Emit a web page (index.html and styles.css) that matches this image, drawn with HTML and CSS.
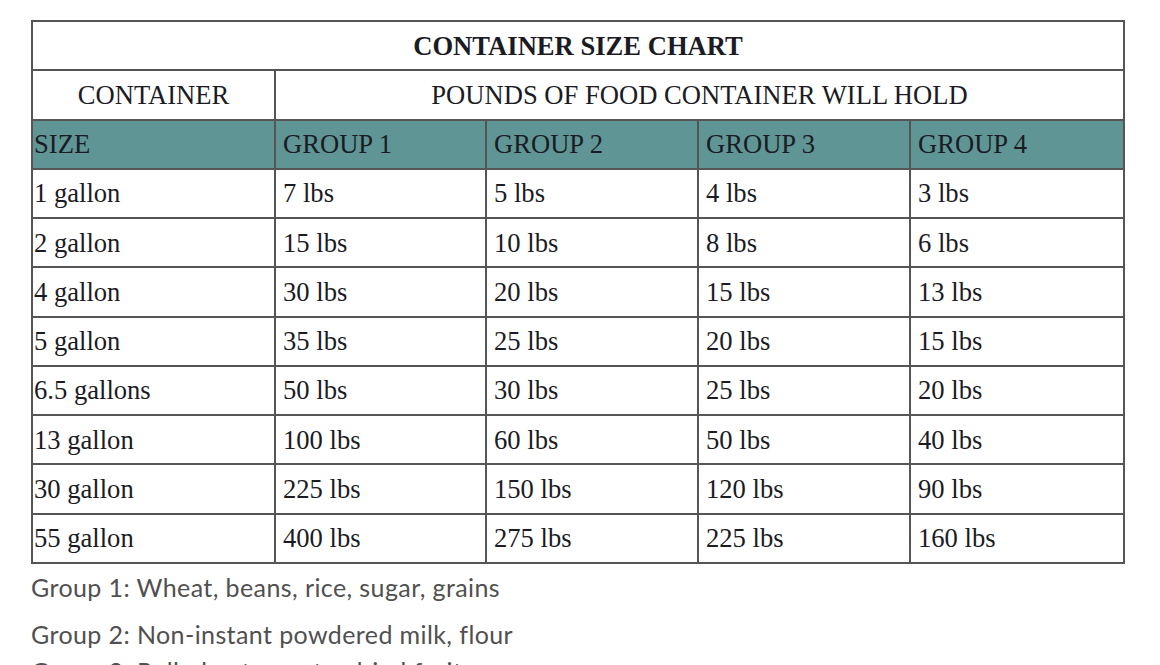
FILE: index.html
```html
<!DOCTYPE html>
<html>
<head>
<meta charset="utf-8">
<link rel="stylesheet" href="styles.css">
</head>
<body>
<div class="page">
  <table class="chart">
    <colgroup>
      <col class="c-size">
      <col class="c-g1">
      <col class="c-g2">
      <col class="c-g3">
      <col class="c-g4">
    </colgroup>
    <tr class="title-row"><th colspan="5" class="title">CONTAINER SIZE CHART</th></tr>
    <tr class="sub-row"><td class="center">CONTAINER</td><td colspan="4" class="center">POUNDS OF FOOD CONTAINER WILL HOLD</td></tr>
    <tr class="head-row"><td class="first">SIZE</td><td>GROUP 1</td><td>GROUP 2</td><td>GROUP 3</td><td>GROUP 4</td></tr>
    <tr><td class="first">1 gallon</td><td>7 lbs</td><td>5 lbs</td><td>4 lbs</td><td>3 lbs</td></tr>
    <tr><td class="first">2 gallon</td><td>15 lbs</td><td>10 lbs</td><td>8 lbs</td><td>6 lbs</td></tr>
    <tr><td class="first">4 gallon</td><td>30 lbs</td><td>20 lbs</td><td>15 lbs</td><td>13 lbs</td></tr>
    <tr><td class="first">5 gallon</td><td>35 lbs</td><td>25 lbs</td><td>20 lbs</td><td>15 lbs</td></tr>
    <tr><td class="first">6.5 gallons</td><td>50 lbs</td><td>30 lbs</td><td>25 lbs</td><td>20 lbs</td></tr>
    <tr><td class="first">13 gallon</td><td>100 lbs</td><td>60 lbs</td><td>50 lbs</td><td>40 lbs</td></tr>
    <tr><td class="first">30 gallon</td><td>225 lbs</td><td>150 lbs</td><td>120 lbs</td><td>90 lbs</td></tr>
    <tr><td class="first">55 gallon</td><td>400 lbs</td><td>275 lbs</td><td>225 lbs</td><td>160 lbs</td></tr>
  </table>
  <p class="note">Group 1: Wheat, beans, rice, sugar, grains</p>
  <p class="note">Group 2: Non-instant powdered milk, flour</p>
  <p class="note note-tail">Group 3: Rolled oats, pasta, dried fruit</p>
</div>
</body>
</html>
```
FILE: styles.css
```css
html, body {
  margin: 0;
  padding: 0;
  background: #ffffff;
}
.page {
  padding: 20px 0 0 31px;
}
.chart {
  border-collapse: collapse;
  table-layout: fixed;
  width: 1094px;
  font-family: "Liberation Serif", "Times New Roman", serif;
  font-size: 26.6px;
  color: #1b1b24;
}
.c-size { width: 243px; }
.c-g1 { width: 211px; }
.c-g2 { width: 212px; }
.c-g3 { width: 212px; }
.c-g4 { width: 214px; }
.chart td, .chart th {
  border: 2px solid #555555;
  height: 47.27px;
  padding: 0 0 0 7px;
  text-align: left;
  vertical-align: middle;
  font-weight: normal;
  white-space: nowrap;
  line-height: 30px;
}
.chart td.first {
  padding-left: 1px;
}
.chart th.title {
  text-align: center;
  font-weight: bold;
  padding: 0;
}
.chart td.center {
  text-align: center;
  padding: 0;
}
.head-row td {
  background: #5f9595;
}
.note {
  margin: 0;
  font-family: "Lato", "Open Sans", sans-serif;
  font-size: 25px;
  letter-spacing: 0.4px;
  color: #505050;
  line-height: 47px;
}
.note-tail {
  line-height: 26px;
}
```
